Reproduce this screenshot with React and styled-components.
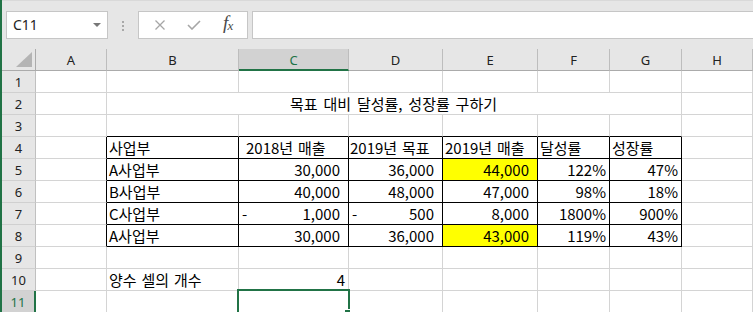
import React from "react";
import styled, { createGlobalStyle } from "styled-components";

const GREEN = "#217346";
const GRID = "#d4d4d4";

const GlobalStyle = createGlobalStyle`
  html, body {
    margin: 0;
    padding: 0;
    background: #fff;
  }
  body {
    width: 753px;
    height: 312px;
    overflow: hidden;
  }
`;

const Window = styled.div`
  width: 753px;
  height: 312px;
  box-sizing: border-box;
  overflow: hidden;
  border-left: 2px solid ${GREEN};
  background: #e6e6e6;
  display: flex;
  flex-direction: column;
`;

const FormulaBar = styled.div`
  height: 49px;
  flex: none;
  box-sizing: border-box;
  border-top: 1px solid #d9d9d9;
  padding: 10px 0 0 4px;
  display: flex;
  align-items: flex-start;
`;

const NameBox = styled.div`
  width: 102px;
  height: 28px;
  box-sizing: border-box;
  border: 1px solid #c6c6c6;
  background: #fff;
  display: flex;
  align-items: center;
  justify-content: space-between;
  padding: 0 6px 1px 6px;
  font-family: "Noto Sans", sans-serif;
  font-size: 14px;
  color: #222;
`;

const DropArrow = styled.span`
  width: 0;
  height: 0;
  border-left: 4px solid transparent;
  border-right: 4px solid transparent;
  border-top: 4px solid #777;
  margin-top: 1px;
`;

const Grip = styled.div`
  width: 30px;
  height: 28px;
  display: flex;
  flex-direction: column;
  align-items: center;
  justify-content: center;
  gap: 2px;
  padding-top: 1px;
  box-sizing: border-box;

  span {
    width: 2px;
    height: 2px;
    background: #a8a8a8;
  }
`;

const FuncBox = styled.div`
  width: 110px;
  height: 28px;
  box-sizing: border-box;
  border: 1px solid #c6c6c6;
  background: #fff;
  display: flex;
  align-items: center;
  justify-content: space-around;
  padding: 0 4px 0 4px;
`;

const Fx = styled.span`
  font-family: "Liberation Serif", serif;
  font-style: italic;
  font-size: 19px;
  line-height: 18px;
  color: #4a4a4a;
  letter-spacing: -1px;
  margin-top: -2px;

  sub {
    font-size: 13px;
    vertical-align: -1px;
  }
`;

const FormulaInput = styled.div`
  flex: 1;
  height: 28px;
  margin-left: 4px;
  box-sizing: border-box;
  border: 1px solid #c6c6c6;
  border-right: none;
  background: #fff;
`;

const Sheet = styled.div`
  position: relative;
  flex: 1;
  display: grid;
  grid-template-columns: 34px 71px 132px 110px 94px 95px 72px 72px 1fr;
  grid-auto-rows: 22px;
  background: #fff;
`;

const Corner = styled.div`
  box-sizing: border-box;
  background: #e6e6e6;
  border-right: 1px solid #ababab;
  border-bottom: 1px solid #ababab;
  display: flex;
  align-items: flex-end;
  justify-content: flex-end;
  padding: 0 3px 3px 0;
`;

const ColHead = styled.div`
  box-sizing: border-box;
  background: ${(p) => (p.$sel ? "#d2d2d2" : "#e6e6e6")};
  border-right: 1px solid #bdbdbd;
  border-bottom: ${(p) => (p.$sel ? `2px solid ${GREEN}` : "1px solid #ababab")};
  color: ${(p) => (p.$sel ? GREEN : "#222")};
  display: flex;
  align-items: center;
  justify-content: center;
  padding-top: ${(p) => (p.$sel ? "1px" : "0")};
  font-family: "Noto Sans", sans-serif;
  font-size: 13px;
`;

const RowHead = styled.div`
  box-sizing: border-box;
  background: ${(p) => (p.$sel ? "#d2d2d2" : "#e6e6e6")};
  border-right: ${(p) => (p.$sel ? `2px solid ${GREEN}` : "1px solid #c0c0c0")};
  border-bottom: 1px solid #d0d0d0;
  color: ${(p) => (p.$sel ? GREEN : "#222")};
  display: flex;
  align-items: center;
  justify-content: center;
  padding-top: 1px;
  font-family: "Noto Sans", sans-serif;
  font-size: 13px;
`;

const Cell = styled.div`
  box-sizing: border-box;
  min-width: 0;
  border-right: 1px solid ${(p) => (p.$rb ? "#000" : GRID)};
  border-bottom: 1px solid ${(p) => (p.$bb ? "#000" : GRID)};
  background: ${(p) => (p.$fill ? "#ffff00" : "#fff")};
  grid-column: ${(p) => (p.$span ? `span ${p.$span}` : "auto")};
  display: flex;
  align-items: flex-end;
  justify-content: ${(p) =>
    p.$align === "right"
      ? "flex-end"
      : p.$align === "center"
      ? "center"
      : p.$align === "split"
      ? "space-between"
      : "flex-start"};
  padding: 0 ${(p) => p.$pr}px 0 ${(p) => p.$pl}px;
  font-family: "Noto Sans CJK KR", "Noto Sans", sans-serif;
  font-size: 15px;
  line-height: 21px;
  word-spacing: 1.5px;
  white-space: nowrap;
  overflow: visible;
  color: #000;
`;

const Title = styled.span`
  word-spacing: 2.5px;
`;

const Selection = styled.div`
  position: absolute;
  left: 235px;
  top: 240px;
  width: 113px;
  height: 30px;
  box-sizing: border-box;
  border: 2px solid ${GREEN};
  pointer-events: none;
`;

const Handle = styled.div`
  position: absolute;
  left: 342px;
  top: 260px;
  width: 7px;
  height: 7px;
  box-sizing: border-box;
  background: ${GREEN};
  border: 1px solid #fff;
`;

const COLS = ["A", "B", "C", "D", "E", "F", "G", "H"];

// values for columns B..G
const DATA = {
  4: [
    { t: "사업부" },
    { t: "2018년 매출", pl: 7 },
    { t: "2019년 목표", pl: 1 },
    { t: "2019년 매출" },
    { t: "달성률" },
    { t: "성장률" },
  ],
  5: [
    { t: "A사업부" },
    { n: "30,000", acct: true },
    { n: "36,000", acct: true },
    { n: "44,000", acct: true, fill: true },
    { n: "122%" },
    { n: "47%" },
  ],
  6: [
    { t: "B사업부" },
    { n: "40,000", acct: true },
    { n: "48,000", acct: true },
    { n: "47,000", acct: true },
    { n: "98%" },
    { n: "18%" },
  ],
  7: [
    { t: "C사업부" },
    { n: "1,000", acct: true, neg: true },
    { n: "500", acct: true, neg: true },
    { n: "8,000", acct: true },
    { n: "1800%" },
    { n: "900%" },
  ],
  8: [
    { t: "A사업부" },
    { n: "30,000", acct: true },
    { n: "36,000", acct: true },
    { n: "43,000", acct: true, fill: true },
    { n: "119%" },
    { n: "43%" },
  ],
  10: [{ t: "양수 셀의 개수" }, { n: "4" }],
};

function renderCell(r, c) {
  const inTable = r >= 4 && r <= 8 && c >= 1 && c <= 6;
  const rb = inTable || (c === 0 && r >= 4 && r <= 8);
  const bb = inTable || (r === 3 && c >= 1 && c <= 6);
  const v = (DATA[r] && c >= 1 && DATA[r][c - 1]) || null;

  if (!v) {
    return <Cell key={c} $rb={rb} $bb={bb} $pl={2} $pr={3} />;
  }
  if (v.t) {
    return (
      <Cell key={c} $rb={rb} $bb={bb} $pl={v.pl ?? 2} $pr={3}>
        {v.t}
      </Cell>
    );
  }
  return (
    <Cell
      key={c}
      $rb={rb}
      $bb={bb}
      $fill={v.fill}
      $align={v.neg ? "split" : "right"}
      $pl={3}
      $pr={v.acct ? 8 : 3}
    >
      {v.neg && <span>-</span>}
      <span>{v.n}</span>
    </Cell>
  );
}

function Row({ r }) {
  if (r === 2) {
    return (
      <>
        <RowHead>{r}</RowHead>
        <Cell $pl={2} $pr={3} />
        <Cell $span={6} $align="center" $pl={2} $pr={3}>
          <Title>목표 대비 달성률, 성장률 구하기</Title>
        </Cell>
        <Cell $pl={2} $pr={3} />
      </>
    );
  }
  return (
    <>
      <RowHead $sel={r === 11}>{r}</RowHead>
      {COLS.map((_, c) => renderCell(r, c))}
    </>
  );
}

export default function App() {
  const rows = [1, 2, 3, 4, 5, 6, 7, 8, 9, 10, 11];
  return (
    <>
      <GlobalStyle />
      <Window>
        <FormulaBar>
          <NameBox>
            <span>C11</span>
            <DropArrow />
          </NameBox>
          <Grip>
            <span />
            <span />
            <span />
          </Grip>
          <FuncBox>
            <svg width="12" height="10" viewBox="0 0 12 10">
              <path d="M1.5 0.5 L10.5 9.5 M10.5 0.5 L1.5 9.5" stroke="#a6a6a6" strokeWidth="1.3" fill="none" />
            </svg>
            <svg width="14" height="10" viewBox="0 0 14 10">
              <path d="M1 5 L5 9 L13 1" stroke="#a6a6a6" strokeWidth="1.6" fill="none" />
            </svg>
            <Fx>
              f<sub>x</sub>
            </Fx>
          </FuncBox>
          <FormulaInput />
        </FormulaBar>
        <Sheet>
          <Corner>
            <svg width="16" height="15" viewBox="0 0 16 15">
              <polygon points="0,15 16,0 16,15" fill="#b4b4b4" />
            </svg>
          </Corner>
          {COLS.map((l, i) => (
            <ColHead key={l} $sel={i === 2}>
              {l}
            </ColHead>
          ))}
          {rows.map((r) => (
            <Row key={r} r={r} />
          ))}
          <Selection />
          <Handle />
        </Sheet>
      </Window>
    </>
  );
}
